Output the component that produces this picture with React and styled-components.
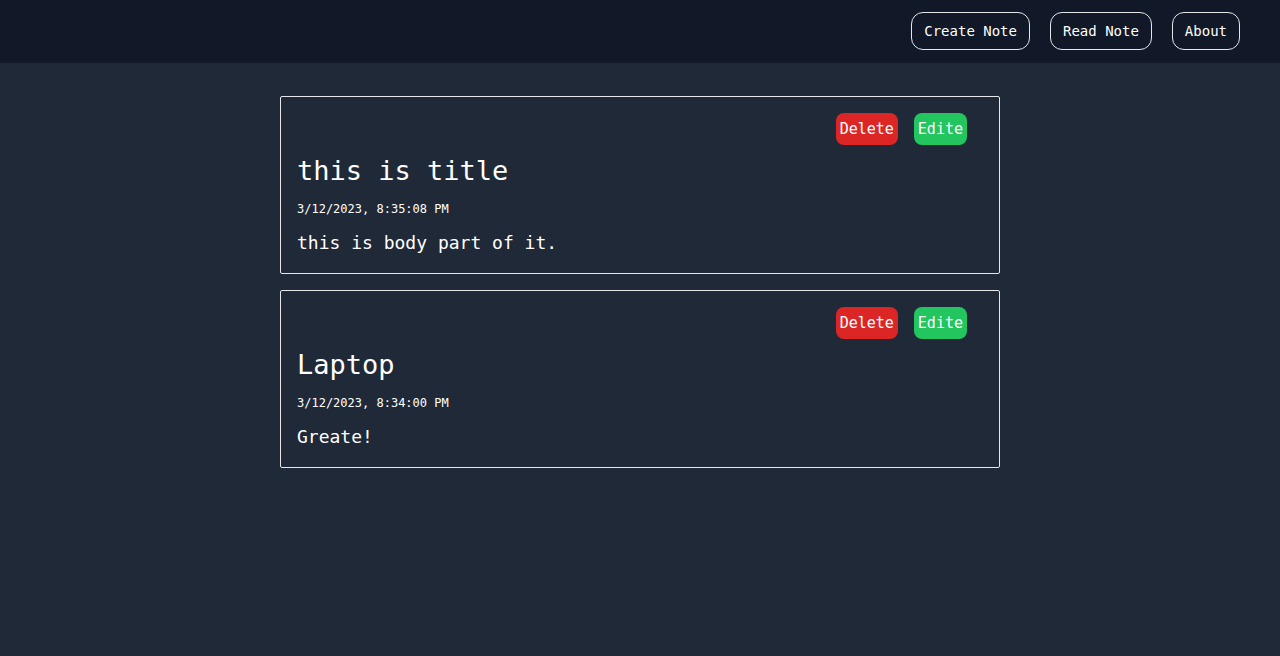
import React from "react";
import styled, { createGlobalStyle } from "styled-components";

const GlobalStyle = createGlobalStyle`
  *, *::before, *::after { box-sizing: border-box; }
  body {
    margin: 0;
    min-height: 100vh;
    background: #1f2937;
    color: #ffffff;
    font-family: "DejaVu Sans Mono", "Liberation Mono", monospace;
  }
`;

const Header = styled.header`
  padding: 12px 40px 13px;
  background: #111827;
`;

const Nav = styled.nav`
  display: flex;
  flex-wrap: wrap;
  justify-content: flex-end;
  gap: 20px;
`;

const NavLink = styled.a`
  padding: 8px 12px;
  border: 1px solid #e5e7eb;
  border-radius: 12px;
  color: inherit;
  font-size: 14px;
  line-height: 20px;
  text-decoration: none;
`;

const NoteList = styled.main`
  display: flex;
  flex-direction: column;
  gap: 16px;
  max-width: 752px;
  margin: 0 auto;
  padding: 33px 16px;
`;

const NoteCard = styled.article`
  padding: 16px;
  border: 1px solid #e5e7eb;
  border-radius: 2px;
`;

const Actions = styled.div`
  display: flex;
  justify-content: flex-end;
  gap: 16px;
  padding-right: 16px;
`;

const ActionButton = styled.button`
  padding: 4px;
  border: 0;
  border-radius: 8px;
  background: ${({ $tone }) => ($tone === "danger" ? "#dc2626" : "#22c55e")};
  color: #ffffff;
  font-family: inherit;
  font-size: 15px;
  line-height: 24px;
  cursor: pointer;
`;

const Title = styled.h2`
  margin: 8px 0 12px;
  font-size: 27px;
  font-weight: 400;
  line-height: 36px;
`;

const Timestamp = styled.time`
  display: block;
  font-size: 12px;
  line-height: 16px;
`;

const Body = styled.p`
  margin: 12px 0 0;
  font-size: 18px;
  line-height: 28px;
`;

const links = ["Create Note", "Read Note", "About"];

const notes = [
  {
    title: "this is title",
    date: "3/12/2023, 8:35:08 PM",
    iso: "2023-03-12T20:35:08",
    body: "this is body part of it.",
  },
  {
    title: "Laptop",
    date: "3/12/2023, 8:34:00 PM",
    iso: "2023-03-12T20:34:00",
    body: "Greate!",
  },
];

export default function App() {
  return (
    <>
      <GlobalStyle />
      <Header>
        <Nav>
          {links.map((label) => (
            <NavLink key={label} href="#">{label}</NavLink>
          ))}
        </Nav>
      </Header>
      <NoteList>
        {notes.map((note) => (
          <NoteCard key={note.iso}>
            <Actions>
              <ActionButton type="button" $tone="danger">Delete</ActionButton>
              <ActionButton type="button" $tone="success">Edite</ActionButton>
            </Actions>
            <Title>{note.title}</Title>
            <Timestamp dateTime={note.iso}>{note.date}</Timestamp>
            <Body>{note.body}</Body>
          </NoteCard>
        ))}
      </NoteList>
    </>
  );
}
